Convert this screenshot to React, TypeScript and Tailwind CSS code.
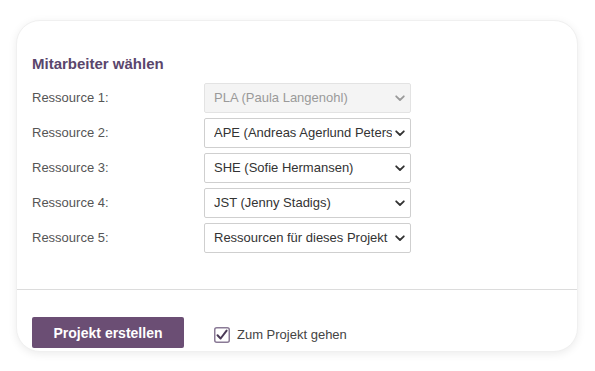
import React from "react";

const Chevron = ({ color }: { color: string }) => (
  <svg width="10" height="7" viewBox="0 0 10 7" className="shrink-0">
    <path d="M1.2 1.3 L5 5 L8.8 1.3" fill="none" stroke={color} strokeWidth="1.8" strokeLinecap="round" strokeLinejoin="round" />
  </svg>
);

const rows = [
  { label: "Ressource 1:", value: "PLA (Paula Langenohl)", disabled: true },
  { label: "Ressource 2:", value: "APE (Andreas Agerlund Petersen)", disabled: false },
  { label: "Ressource 3:", value: "SHE (Sofie Hermansen)", disabled: false },
  { label: "Ressource 4:", value: "JST (Jenny Stadigs)", disabled: false },
  { label: "Ressource 5:", value: "Ressourcen für dieses Projekt", disabled: false },
];

export default function App() {
  return (
    <div className="w-[595px] h-[371px] bg-white pt-[20px] pl-[16px] overflow-hidden" style={{ fontFamily: '"Liberation Sans", Arial, sans-serif' }}>
      <div className="w-[562px] h-[332px] rounded-[24px] bg-white border border-[#f0f0f0] shadow-[0_2px_8px_rgba(0,0,0,0.08)] flex flex-col overflow-hidden">
        <div className="pl-[15px] pt-[34px] h-[269px] border-b border-[#dcdcdc]">
          <h2 className="text-[15px] font-bold text-[#5a466c] leading-[18px] mb-[10px]">Mitarbeiter wählen</h2>
          <div className="flex flex-col gap-[5px]">
            {rows.map((r) => (
              <div key={r.label} className="flex items-center h-[30px]">
                <div className="w-[172px] text-[13px] text-[#555555] leading-[16px]">{r.label}</div>
                <div
                  className={
                    "w-[207px] h-[30px] flex items-center pl-[9px] pr-[5px] border rounded-[2px] " +
                    (r.disabled ? "bg-[#f4f4f4] border-[#e3e3e3]" : "bg-white border-[#cfcfcf]")
                  }
                >
                  <div className={"flex-1 min-w-0 overflow-hidden whitespace-nowrap text-[13px] leading-[16px] " + (r.disabled ? "text-[#9a9a9a]" : "text-[#333333]")}>
                    {r.value}
                  </div>
                  <div className="pl-[3px]">
                    <Chevron color={r.disabled ? "#9a9a9a" : "#333333"} />
                  </div>
                </div>
              </div>
            ))}
          </div>
        </div>
        <div className="pl-[15px] pt-[27px] flex items-center">
          <button className="w-[152px] h-[31px] bg-[#6b4e74] text-white text-[14px] font-bold rounded-[2px] leading-[16px]">
            Projekt erstellen
          </button>
          <div className="ml-[30px] mt-[5px] flex items-center">
            <svg width="16" height="16" viewBox="0 0 16 16" className="shrink-0">
              <rect x="0.75" y="0.75" width="14.5" height="14.5" rx="2" fill="white" stroke="#8a7a96" strokeWidth="1.5" />
              <path d="M3.5 8.2 L6.6 11.5 L12.6 3.6" fill="none" stroke="#4b3a57" strokeWidth="2" strokeLinecap="round" strokeLinejoin="round" />
            </svg>
            <span className="ml-[7px] text-[13px] text-[#444444] leading-[16px]">Zum Projekt gehen</span>
          </div>
        </div>
      </div>
    </div>
  );
}
